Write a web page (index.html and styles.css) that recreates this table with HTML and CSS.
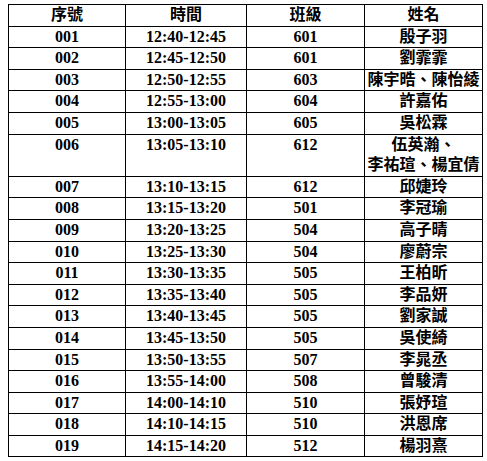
FILE: index.html
```html
<!DOCTYPE html>
<html>
<head>
<meta charset="utf-8">
<title>名單</title>
<link rel="stylesheet" href="styles.css">
</head>
<body>
<div class="page">
  <table class="list">
    <colgroup>
      <col class="c1"><col class="c2"><col class="c3"><col class="c4">
    </colgroup>
    <thead>
      <tr><th>序號</th><th>時間</th><th>班級</th><th>姓名</th></tr>
    </thead>
    <tbody>
      <tr><td>001</td><td>12:40-12:45</td><td>601</td><td>殷子羽</td></tr>
      <tr><td>002</td><td>12:45-12:50</td><td>601</td><td>劉霏霏</td></tr>
      <tr><td>003</td><td>12:50-12:55</td><td>603</td><td>陳宇晧、陳怡綾</td></tr>
      <tr><td>004</td><td>12:55-13:00</td><td>604</td><td>許嘉佑</td></tr>
      <tr><td>005</td><td>13:00-13:05</td><td>605</td><td>吳松霖</td></tr>
      <tr><td>006</td><td>13:05-13:10</td><td>612</td><td>伍英瀚、<br>李祐瑄、楊宜倩</td></tr>
      <tr><td>007</td><td>13:10-13:15</td><td>612</td><td>邱婕玲</td></tr>
      <tr><td>008</td><td>13:15-13:20</td><td>501</td><td>李冠瑜</td></tr>
      <tr><td>009</td><td>13:20-13:25</td><td>504</td><td>高子晴</td></tr>
      <tr><td>010</td><td>13:25-13:30</td><td>504</td><td>廖蔚宗</td></tr>
      <tr><td>011</td><td>13:30-13:35</td><td>505</td><td>王柏昕</td></tr>
      <tr><td>012</td><td>13:35-13:40</td><td>505</td><td>李品妍</td></tr>
      <tr><td>013</td><td>13:40-13:45</td><td>505</td><td>劉家誠</td></tr>
      <tr><td>014</td><td>13:45-13:50</td><td>505</td><td>吳使綺</td></tr>
      <tr><td>015</td><td>13:50-13:55</td><td>507</td><td>李晁丞</td></tr>
      <tr><td>016</td><td>13:55-14:00</td><td>508</td><td>曾駿清</td></tr>
      <tr><td>017</td><td>14:00-14:10</td><td>510</td><td>張妤瑄</td></tr>
      <tr><td>018</td><td>14:10-14:15</td><td>510</td><td>洪恩席</td></tr>
      <tr><td>019</td><td>14:15-14:20</td><td>512</td><td>楊羽熹</td></tr>
    </tbody>
  </table>
</div>
</body>
</html>
```
FILE: styles.css
```css
html, body {
  margin: 0;
  padding: 0;
  background: #fff;
}
.page {
  padding: 4px 0 0 8px;
  color: #000;
}
.list {
  border-collapse: collapse;
  table-layout: fixed;
  width: 474px;
  font-family: "Liberation Serif", "Noto Sans CJK TC", serif;
  font-weight: bold;
  font-size: 16px;
}
.c1 { width: 117px; }
.c2 { width: 121px; }
.c3 { width: 118px; }
.c4 { width: 118px; }
.list th,
.list td {
  border: 1px solid #000;
  padding: 0 1px;
  line-height: 20.6px;
  text-align: center;
  vertical-align: top;
  font-family: "Liberation Serif", "Noto Sans CJK TC", serif;
  font-weight: bold;
  white-space: nowrap;
}
```
